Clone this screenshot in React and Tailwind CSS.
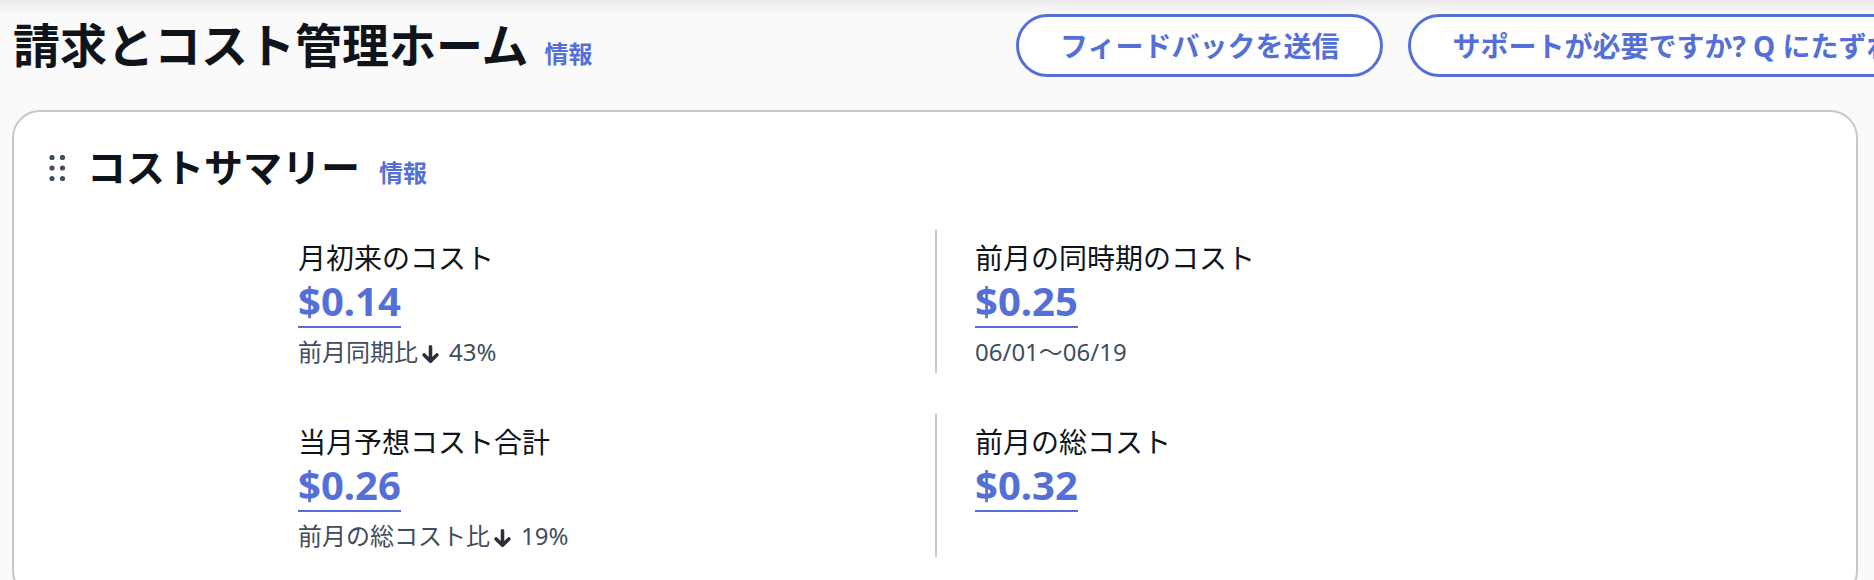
import React from "react";

const BLUE = "text-[#5470d6]";

function DragHandle() {
  return (
    <svg width="16" height="26" viewBox="0 0 16 26" className="shrink-0 text-[#414d5c]">
      {[2.5, 13].map((x) =>
        [2.5, 13, 23.5].map((y) => <circle key={`${x}-${y}`} cx={x + 0.5} cy={y} r="2.6" fill="currentColor" />)
      )}
    </svg>
  );
}

function ArrowDown() {
  return (
    <svg width="19" height="19" viewBox="0 0 16 16" className="ml-[3px] mr-[9px] inline-block align-[-3px] text-[#2b2f36]">
      <path d="M8 1.5v12M2.6 8.4 8 13.6l5.4-5.2" fill="none" stroke="currentColor" strokeWidth="3" strokeLinecap="round" strokeLinejoin="round" />
    </svg>
  );
}

function CostCell({ label, value, sub, divider }) {
  return (
    <div className={`h-[143px] pt-[10px] ${divider ? "border-l-2 border-[#c6c6cd] pl-[38px]" : ""}`}>
      <div className="text-[28px] leading-[36px] text-[#0f141a]">{label}</div>
      <div className="flex">
        <a href="#" className={`border-b-2 border-[#5470d6] text-[40px] font-bold leading-[50px] ${BLUE}`}>
          {value}
        </a>
      </div>
      {sub && <div className="mt-[8px] text-[24px] leading-[32px] text-[#414d5c]">{sub}</div>}
    </div>
  );
}

export default function App() {
  return (
    <div className="min-h-[580px] w-[1874px] overflow-hidden bg-[#fafafa] bg-[linear-gradient(to_bottom,#e9e9ea_0px,#fafafa_14px)] font-['Noto_Sans','Noto_Sans_CJK_JP',sans-serif]">
      {/* page header */}
      <header className="flex items-center pl-[13px] pt-[14px]">
        <div className="flex w-[1003px] shrink-0 items-baseline gap-[16px]">
          <h1 className="text-[47px] font-bold leading-[63px] text-[#0f141a]">請求とコスト管理ホーム</h1>
          <a href="#" className={`text-[24px] font-bold ${BLUE}`}>情報</a>
        </div>
        <div className="flex shrink-0 gap-[25px]">
          <button className={`h-[63px] shrink-0 whitespace-nowrap rounded-full border-[3px] border-[#5470d6] bg-white px-[41px] text-[28px] font-bold ${BLUE}`}>
            フィードバックを送信
          </button>
          <button className={`h-[63px] shrink-0 whitespace-nowrap rounded-full border-[3px] border-[#5470d6] bg-white px-[41px] text-[28px] font-bold ${BLUE}`}>
            サポートが必要ですか? Q にたずねる
          </button>
        </div>
      </header>

      {/* cost summary card */}
      <section className="ml-[12px] mt-[33px] w-[1846px] rounded-[28px] border-2 border-[#c6c6cd] bg-white pb-[40px]">
        <div className="mt-[34px] flex h-[44px] items-center gap-[22px] pl-[35px]">
          <DragHandle />
          <div className="flex items-baseline gap-[19px]">
            <h2 className="text-[39px] font-bold leading-[44px] text-[#0f141a]">コストサマリー</h2>
            <a href="#" className={`text-[24px] font-bold ${BLUE}`}>情報</a>
          </div>
        </div>

        <div className="mt-[40px] grid grid-cols-[637px_1fr] gap-y-[41px] pl-[284px]">
          <CostCell
            label="月初来のコスト"
            value="$0.14"
            sub={
              <>
                前月同期比
                <ArrowDown />
                43%
              </>
            }
          />
          <CostCell divider label="前月の同時期のコスト" value="$0.25" sub="06/01〜06/19" />
          <CostCell
            label="当月予想コスト合計"
            value="$0.26"
            sub={
              <>
                前月の総コスト比
                <ArrowDown />
                19%
              </>
            }
          />
          <CostCell divider label="前月の総コスト" value="$0.32" />
        </div>
      </section>
    </div>
  );
}
